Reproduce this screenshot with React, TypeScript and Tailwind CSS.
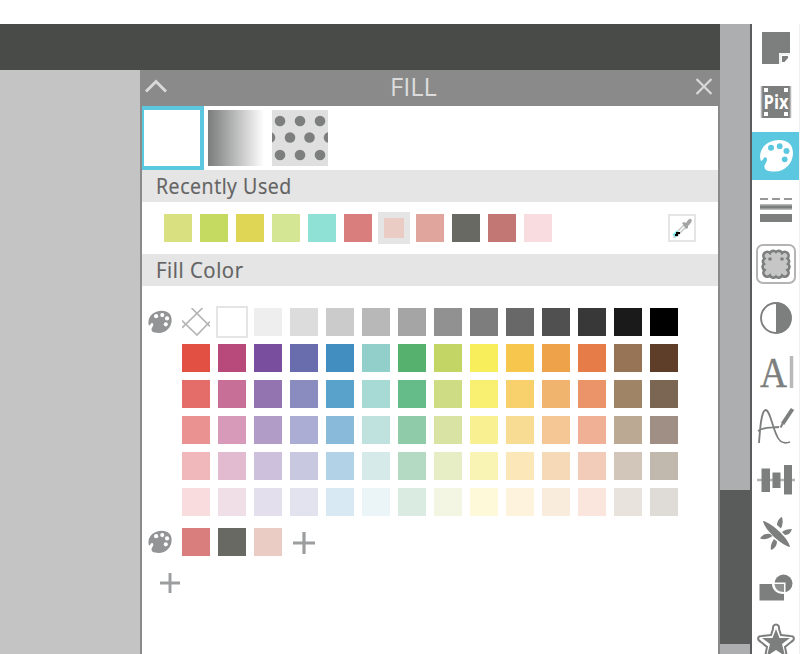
import type { ReactNode } from 'react'

const GREYS = ['#eeeeee', '#dcdcdc', '#cbcbcb', '#b8b8b8', '#a5a5a5', '#919191', '#7d7d7d', '#686868', '#505050', '#383838', '#1a1a1a', '#000000']

const COLOR_ROWS = [
  ['#e15043', '#b84a7b', '#794e9e', '#696dae', '#428ec0', '#93cfca', '#56b16e', '#c2d565', '#f8ee5c', '#f6c64d', '#eea34b', '#e67d49', '#967455', '#5f3e29'],
  ['#e46c69', '#c76f97', '#9373b0', '#8a8cc0', '#59a2cc', '#a7d9d5', '#66bc88', '#cedd84', '#f9ef70', '#f8d06c', '#f1b46f', '#eb9369', '#9f8566', '#7b6654'],
  ['#ea9292', '#d79ab8', '#b19bc7', '#abadd4', '#8abad9', '#bfe2df', '#90cba9', '#d9e4a4', '#f9f092', '#f9dc93', '#f4c795', '#f0b095', '#bba994', '#a08f84'],
  ['#f0b8ba', '#e3bbd0', '#cdc0dc', '#c8c8e1', '#b2d3e7', '#d6ebe9', '#b5dac4', '#e7edc4', '#faf4b4', '#fbe7b7', '#f6dab8', '#f2cbb9', '#d1c6b9', '#c1b8ae'],
  ['#f9dcde', '#f0dfe7', '#e4dfec', '#e3e3f0', '#d9e9f4', '#ebf5f7', '#daece2', '#f3f6e2', '#fdf9d9', '#fef4dd', '#f9ecdd', '#fbe6dd', '#e8e3dd', '#dfdcd8'],
]

const RECENT = ['#d9e07f', '#c5da60', '#dfd655', '#d4e594', '#8fe0d5', '#d97e7c', '#eaccc4', '#e0a69e', '#676962', '#c27775', '#f8dcdf']
const SELECTED_RECENT = 6
const CUSTOM = ['#d97e7c', '#676962', '#eaccc4']

function Swatch({ color }: { color: string }) {
  return <div className="h-7 w-7 shrink-0" style={{ backgroundColor: color }} />
}

function PaletteShape({ hole }: { hole: string }) {
  return (
    <>
      <path
        d="M8.500 28C6 17 15 8 27 8C36 8 41 13 41 21C41 32 32 40 22 39.500C16 39.300 12 38 12.500 34C12.700 32 15 30 15 27.500C15 25 12.500 24.500 11.500 26.500C11 28 9.500 30 8.500 28Z"
        fill="currentColor"
      />
      <g fill={hole}>
        <circle cx="19" cy="15.800" r="3" />
        <circle cx="27.700" cy="14.200" r="2.900" />
        <circle cx="34.500" cy="19" r="3" />
        <circle cx="32.700" cy="27.300" r="2.900" />
      </g>
    </>
  )
}

function SmallPalette() {
  return (
    <svg viewBox="7.500 7 34 34" className="h-6 w-6 shrink-0 text-[#929495]">
      <PaletteShape hole="#ffffff" />
    </svg>
  )
}

function Plus({ className }: { className: string }) {
  return (
    <svg viewBox="0 0 22 22" className={className}>
      <path d="M11 0V22M0 11H22" stroke="#9b9d9e" strokeWidth="3.200" />
    </svg>
  )
}

function SectionTitle({ wide = false, children }: { wide?: boolean; children: ReactNode }) {
  return (
    <div className="flex h-8 shrink-0 items-start bg-[#e5e5e5] pl-[14px] text-[22px] leading-[30px] text-[#626262]">
      <span
        className={`inline-block origin-left whitespace-nowrap tracking-[0.6px] [-webkit-text-stroke:0.2px_#626262] ${wide ? 'scale-x-[0.925]' : 'scale-x-[0.89]'}`}
      >
        {children}
      </span>
    </div>
  )
}

function Tool({ active = false, children }: { active?: boolean; children: ReactNode }) {
  return (
    <div className={active ? 'h-12 shrink-0 bg-[#5cc8e0] text-white' : 'h-12 shrink-0 text-[#7d7f7e]'}>
      <svg viewBox="0 0 48 48" className="h-12 w-12">
        {children}
      </svg>
    </div>
  )
}

function Toolbar() {
  return (
    <div className="flex w-12 shrink-0 flex-col gap-1.5 overflow-hidden border-r border-[#f0f0f0] bg-white">
      <Tool>
        <path d="M10 8H38V29H27V40H10Z" fill="currentColor" />
        <path d="M30 38V32H36V34L32.500 38Z" fill="currentColor" />
        <path d="M28 39.500V30H38" fill="none" stroke="#e2e2e2" strokeWidth="1" />
      </Tool>
      <Tool>
        <rect x="9" y="8" width="30" height="32" fill="currentColor" />
        <path d="M9.500 8V40M38.500 8V40" stroke="#b5b6b5" strokeWidth="1.500" />
        <path d="M12 10h4v4h-4zM32 10h4v4h-4zM12 34h4v4h-4zM32 34h4v4h-4z" fill="#fff" />
        <text x="11.500" y="31" fontSize="20" fontWeight="700" textLength="25" lengthAdjust="spacingAndGlyphs" fill="#fff" fontFamily="Open Sans, sans-serif">
          Pix
        </text>
      </Tool>
      <Tool active>
        <PaletteShape hole="#5cc8e0" />
      </Tool>
      <Tool>
        <path d="M8 13H16M20 13H28M32 13H40" stroke="currentColor" strokeWidth="2" opacity="0.8" />
        <path d="M8 21H40" stroke="#b8bab9" strokeWidth="6" />
        <path d="M8 21H40" stroke="currentColor" strokeWidth="3" />
        <path d="M8 32H40" stroke="currentColor" strokeWidth="8" />
      </Tool>
      <Tool>
        <rect x="5" y="5" width="38" height="38" rx="6" fill="none" stroke="#b3b4b3" strokeWidth="2" />
        <path
          d="M12.500 18.500A3.500 3.500 0 0 1 18 13A3.600 3.600 0 0 1 24 12A3.600 3.600 0 0 1 30 13A3.500 3.500 0 0 1 35.500 18.500A3.500 3.500 0 0 1 36 24A3.500 3.500 0 0 1 35.500 30A3.500 3.500 0 0 1 30 35.500A3.600 3.600 0 0 1 24 36.500A3.600 3.600 0 0 1 18 35.500A3.500 3.500 0 0 1 12.500 30A3.500 3.500 0 0 1 12 24A3.500 3.500 0 0 1 12.500 18.500Z"
          fill="#c5c6c5"
          stroke="currentColor"
          strokeWidth="2.600"
        />
        <circle cx="18" cy="19" r="1.800" fill="currentColor" />
        <circle cx="30" cy="19" r="1.800" fill="currentColor" />
      </Tool>
      <Tool>
        <circle cx="24" cy="24" r="15" fill="none" stroke="currentColor" strokeWidth="1.800" />
        <path d="M24 8.500A15.500 15.500 0 0 1 24 39.500Z" fill="currentColor" />
      </Tool>
      <Tool>
        <text x="8" y="38.500" fontSize="42" textLength="27" lengthAdjust="spacingAndGlyphs" fill="currentColor" stroke="currentColor" strokeWidth="0.400" fontFamily="Liberation Serif, serif">
          A
        </text>
        <path d="M39.500 8V40" stroke="#b8b9b8" strokeWidth="3.500" />
      </Tool>
      <Tool>
        <path d="M7 41C8 28 9 9 13.500 8C18 8 20 24 25 34C28 41 32 42 38 40M6 29C13 24 20 26 27 25" fill="none" stroke="currentColor" strokeWidth="1.800" />
        <path d="M40.500 7L30.500 22" stroke="currentColor" strokeWidth="4" />
        <path d="M30.500 22L28.500 25.500" stroke="currentColor" strokeWidth="2" />
      </Tool>
      <Tool>
        <path d="M5 24H43" stroke="#b3b4b3" strokeWidth="2.500" />
        <path d="M9.500 12.500H18V36H9.500ZM20.500 16.500H28.500V32H20.500ZM32 9H40V38.500H32Z" fill="currentColor" />
      </Tool>
      <Tool>
        <path d="M11 11C18 12 36 27 38 37C31 36 13 21 11 11Z" fill="currentColor" />
        <path d="M30 7C27 8 25 12 25 15L29 18.500C31 15 31 10 30 7ZM40 19C36 19 32 20 30 22L33 25C37 25 39 22 40 19ZM8 28.500C10 25 14 23 18 24L20.500 26C17 29 12 30 8 28.500ZM19 40C18 36 20 32 22 29L25 31.500C25 36 22 39 19 40Z" fill="currentColor" />
      </Tool>
      <Tool>
        <circle cx="31.500" cy="19.500" r="9" fill="currentColor" />
        <path d="M6 18.500H33.500V38.500H6Z" fill="#fff" />
        <path d="M7.500 20H20C20 25 24 30 32 30V36.500H7.500Z" fill="currentColor" />
        <path d="M22.500 20H32V28C26 28 23 25 22.500 20Z" fill="currentColor" opacity="0.85" />
      </Tool>
      <Tool>
        <path
          d="M21 11C20 5 28 5 27 11L29 17L38 18C43 18 43 22 39 24L33 29L35 39C36 43 32 44 28 42L24 39L20 42C16 44 12 43 13 39L15 29L9 24C5 22 5 18 10 18L19 17Z"
          fill="none"
          stroke="currentColor"
          strokeWidth="2"
        />
        <path d="M24 11L27.500 20H38L30 26L33 38L24 32L15 38L18 26L10 20H20.500Z" fill="currentColor" />
      </Tool>
    </div>
  )
}

function FillTypes() {
  return (
    <div className="flex h-16 shrink-0">
      <div className="h-16 w-[62px] border-2 border-t-4 border-r-4 border-b-4 border-[#5cc8e0] bg-white" />
      <div className="mt-1 ml-1 h-14 w-14 bg-linear-to-r from-[#7b7d7c] to-white" />
      <svg viewBox="0 0 56 56" className="mt-1 ml-2 h-14 w-14 bg-[#dfdfdf] text-[#7d7f7e]">
        {[8, 28, 48].map((x) => (
          <g key={x} fill="currentColor">
            <circle cx={x} cy="11" r="5.300" />
            <circle cx={x} cy="45" r="5.300" />
          </g>
        ))}
        {[-2, 18, 37.5, 57].map((x) => (
          <circle key={x} cx={x} cy="27.500" r="5.300" fill="currentColor" />
        ))}
      </svg>
    </div>
  )
}

function RecentColors() {
  return (
    <div className="flex h-[52px] shrink-0 items-center justify-between pr-[22px] pl-[22px]">
      <div className="flex gap-2">
        {RECENT.map((color, i) =>
          i === SELECTED_RECENT ? (
            <div key={color} className="-mx-0.5 -my-0.5 flex h-8 w-8 items-center justify-center bg-[#e5e5e5]">
              <div className="h-5 w-5" style={{ backgroundColor: color }} />
            </div>
          ) : (
            <Swatch key={color} color={color} />
          ),
        )}
      </div>
      <div className="h-7 w-7 border-2 border-[#e5e5e5]">
        <svg viewBox="0 0 24 24" className="h-6 w-6">
          <path d="M14 9L5 18L4 21L7 20L16 11" fill="#fff" stroke="#c8c9c9" strokeWidth="1.500" />
          <path d="M12 7L14 6L16 7C18 4 20 1.500 21.500 3.500C22.500 5.500 20 8 18 10L18 12L16 13Z" fill="#a3a5a5" />
          <path d="M4 20L8 16" stroke="#7eeaf0" strokeWidth="4" />
          <path d="M6 16H10V18H8V20H5V18H6Z" fill="#000" />
        </svg>
      </div>
    </div>
  )
}

function FillColors() {
  return (
    <div className="flex flex-col pt-[22px] pl-1.5">
      <div className="flex items-center">
        <SmallPalette />
        <div className="ml-2.5 flex items-center gap-2">
          <svg viewBox="0 0 28 28" className="h-7 w-7">
            <path d="M9.500 0L28 18.500M20.500 0L0 20M0 12.500L15 27L28 13.500" fill="none" stroke="#b5b5b5" strokeWidth="1.700" />
          </svg>
          <div className="-m-0.5 h-8 w-8 border-2 border-[#e5e5e5] bg-white" />
          {GREYS.map((color) => (
            <Swatch key={color} color={color} />
          ))}
        </div>
      </div>
      <div className="mt-2 ml-[34px] flex flex-col gap-2">
        {COLOR_ROWS.map((row) => (
          <div key={row[0]} className="flex gap-2">
            {row.map((color) => (
              <Swatch key={color} color={color} />
            ))}
          </div>
        ))}
      </div>
      <div className="mt-3 flex items-center">
        <SmallPalette />
        <div className="ml-2.5 flex items-center gap-2">
          {CUSTOM.map((color) => (
            <Swatch key={color} color={color} />
          ))}
          <Plus className="mt-0.5 ml-[3px] h-[22px] w-[22px]" />
        </div>
      </div>
      <Plus className="mt-[17px] ml-3 h-5 w-5" />
    </div>
  )
}

export default function App() {
  return (
    <div className="flex h-[654px] w-[800px] overflow-hidden bg-white font-['Open_Sans',sans-serif]">
      <div className="flex w-[720px] shrink-0 flex-col pt-6">
        <div className="h-[46px] shrink-0 bg-[#494b49]" />
        <div className="flex min-h-0 flex-1">
          <div className="w-[140px] shrink-0 bg-[#c4c4c4]" />
          <div className="flex min-w-0 flex-1 flex-col border-x-2 border-[#8a8a8a] bg-white">
            <div className="flex h-9 shrink-0 items-center bg-[#8a8a8a]">
              <svg viewBox="0 0 28 36" className="h-9 w-7">
                <path d="M4 21.500L14 11.500L24 21.500" fill="none" stroke="#d9d9d9" strokeWidth="3" />
              </svg>
              <span className="-mt-[3px] ml-[220px] origin-left scale-x-[1.02] text-[25px] leading-[33px] text-[#dcdcdc]">FILL</span>
              <svg viewBox="0 0 28 36" className="ml-auto h-9 w-7">
                <path d="M6.500 9L21.500 24M21.500 9L6.500 24" fill="none" stroke="#d9d9d9" strokeWidth="2.200" />
              </svg>
            </div>
            <FillTypes />
            <SectionTitle>Recently Used</SectionTitle>
            <RecentColors />
            <SectionTitle wide>Fill Color</SectionTitle>
            <FillColors />
          </div>
        </div>
      </div>
      <div className="mt-6 flex w-8 shrink-0 flex-col border-r-2 border-[#5a5c5b] bg-[#adaeb0]">
        <div className="mt-[466px] h-[154px] bg-[#5a5c5b]" />
      </div>
      <div className="flex pt-6">
        <Toolbar />
      </div>
    </div>
  )
}
